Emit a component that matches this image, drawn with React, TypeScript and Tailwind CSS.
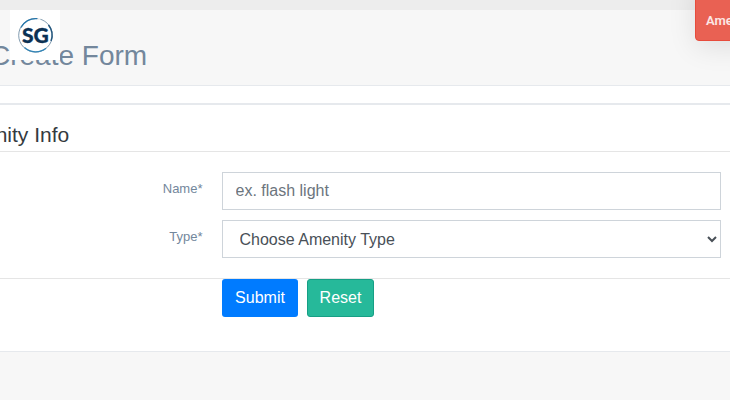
import React from "react";

function Logo() {
  return (
    <svg
      className="absolute left-[10px] top-[10px] h-[50px] w-[50px] bg-white"
      viewBox="0 0 50 50"
      fill="none"
    >
      <circle cx="25.5" cy="25.3" r="16.8" stroke="#62839c" strokeWidth="0.8" />
      <path d="M11 17.5A16.6 16.6 0 0 1 27 8.6" stroke="#2476ab" strokeWidth="1.2" />
      <path d="M38.5 15A16.6 16.6 0 0 1 41 31" stroke="#24577e" strokeWidth="1.5" />
      <path d="M14.5 37.5A16.6 16.6 0 0 0 36 38.2" stroke="#3185b7" strokeWidth="1.2" />
      <path d="M28.2 8.6L30.5 9.3" stroke="#fff" strokeWidth="1.5" />
      <text
        x="12"
        y="32.6"
        textLength="26.8"
        lengthAdjust="spacingAndGlyphs"
        fill="#0b3154"
        stroke="#0b3154"
        strokeWidth="0.3"
        className="font-['Lato',sans-serif] text-[21px] font-black"
      >
        SG
      </text>
    </svg>
  );
}

export default function App() {
  return (
    <div className="relative h-[400px] w-[730px] overflow-hidden bg-[#f7f7f7] font-['Liberation_Sans',sans-serif]">
      <div className="h-[10px] bg-[#ededed]" />
      <header className="h-[75px] pt-[25px]">
        <h1 className="-ml-[10px] whitespace-nowrap text-[28px] leading-[41px] text-[#73879c]">
          Create Form
        </h1>
      </header>
      <main className="h-[267px] border-y border-[#e6e9ed] bg-white pt-[17px]">
        <div className="h-[49px] border-b border-t-2 border-b-[#e5e5e5] border-t-[#e6e9ed]">
          <h2 className="-ml-[16px] whitespace-nowrap pt-[15px] text-[21px] leading-[30px] text-[#343a40]">
            enity Info
          </h2>
        </div>
        <form className="text-[16px]" onSubmit={(e) => e.preventDefault()}>
          <div className="h-[127px] border-b border-[#e5e5e5] pt-[20px]">
            <div className="mb-[10px] flex h-[38px]">
              <label className="w-[202.5px] pt-[7px] text-right text-[13px] leading-[20px] text-[#73879c]">
                Name*
              </label>
              <input
                className="ml-[19.5px] h-[38px] w-[499px] border border-[#ced4da] px-[12.5px] leading-[24px] placeholder:text-[#6c757d]"
                placeholder="ex. flash light"
              />
            </div>
            <div className="flex h-[38px]">
              <label className="w-[202.5px] pt-[7px] text-right text-[13px] leading-[20px] text-[#73879c]">
                Type*
              </label>
              <select className="ml-[19.5px] h-[38px] w-[499px] border border-[#ced4da] bg-white pl-[12.5px] pr-[13px] text-[#495057]">
                <option>Choose Amenity Type</option>
              </select>
            </div>
          </div>
          <div className="flex gap-[9px] pl-[222px] text-white">
            <button className="h-[38px] w-[76px] rounded-[3px] bg-[#007bff]">Submit</button>
            <button className="h-[38px] w-[67px] rounded-[3px] border border-[#169f85] bg-[#26b99a]">
              Reset
            </button>
          </div>
        </form>
      </main>
      <Logo />
      <div className="absolute left-[695px] top-[-20px] h-[61px] w-[200px] rounded-[4px] border border-[#e74c3c] bg-[#e96153] pl-[10px] pt-[30px] font-['Roboto',sans-serif] text-[13px] font-semibold leading-[20px] text-white/85 shadow-[0_6px_28px_rgba(0,0,0,0.1)]">
        Amenity
      </div>
    </div>
  );
}
